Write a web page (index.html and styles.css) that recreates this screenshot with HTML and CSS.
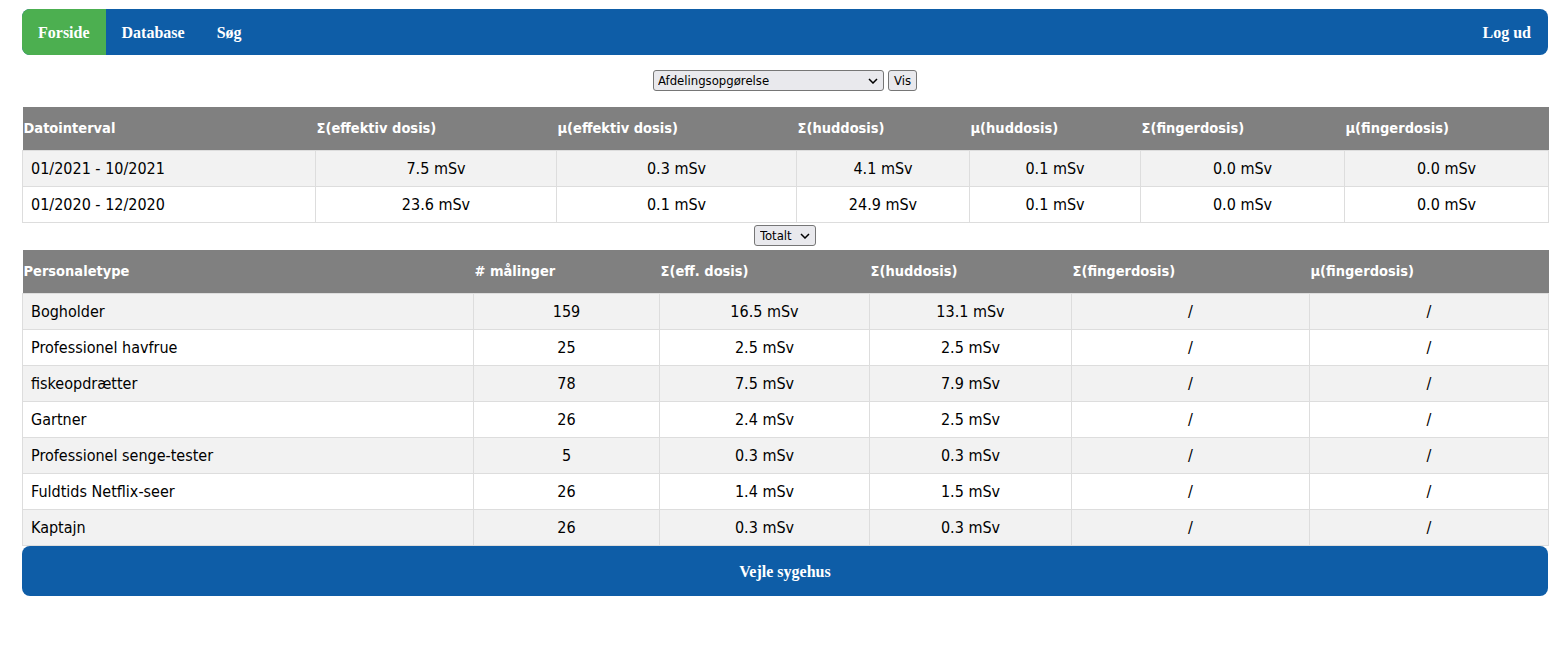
FILE: index.html
```html
<!DOCTYPE html>
<html lang="da">
<head>
<meta charset="utf-8">
<title>Forside</title>
<link rel="stylesheet" href="styles.css">
</head>
<body>
<div class="page">
  <nav class="topnav">
    <a class="nav-link active" href="#">Forside</a>
    <a class="nav-link" href="#">Database</a>
    <a class="nav-link" href="#">Søg</a>
    <a class="nav-link right" href="#">Log ud</a>
  </nav>

  <form class="report-form">
    <span class="select-wrap">
      <select class="report-select">
        <option>Afdelingsopgørelse</option>
      </select>
      <svg class="chev" width="10" height="6" viewBox="0 0 10 6"><path d="M1 1 L5 5 L9 1" fill="none" stroke="#000" stroke-width="1.5"/></svg>
    </span>
    <button type="button" class="vis-btn">Vis</button>
  </form>

  <table class="data-table summary">
    <colgroup>
      <col class="c1-1"><col class="c1-2"><col class="c1-3"><col class="c1-4"><col class="c1-5"><col class="c1-6"><col class="c1-7">
    </colgroup>
    <thead>
      <tr>
        <th>Datointerval</th>
        <th>Σ(effektiv dosis)</th>
        <th>μ(effektiv dosis)</th>
        <th>Σ(huddosis)</th>
        <th>μ(huddosis)</th>
        <th>Σ(fingerdosis)</th>
        <th>μ(fingerdosis)</th>
      </tr>
    </thead>
    <tbody>
      <tr>
        <td class="label">01/2021 - 10/2021</td>
        <td>7.5 mSv</td><td>0.3 mSv</td><td>4.1 mSv</td><td>0.1 mSv</td><td>0.0 mSv</td><td>0.0 mSv</td>
      </tr>
      <tr>
        <td class="label">01/2020 - 12/2020</td>
        <td>23.6 mSv</td><td>0.1 mSv</td><td>24.9 mSv</td><td>0.1 mSv</td><td>0.0 mSv</td><td>0.0 mSv</td>
      </tr>
    </tbody>
  </table>

  <div class="total-row">
    <span class="select-wrap">
      <select class="total-select">
        <option>Totalt</option>
      </select>
      <svg class="chev" width="10" height="6" viewBox="0 0 10 6"><path d="M1 1 L5 5 L9 1" fill="none" stroke="#000" stroke-width="1.5"/></svg>
    </span>
  </div>

  <table class="data-table staff">
    <colgroup>
      <col class="c2-1"><col class="c2-2"><col class="c2-3"><col class="c2-4"><col class="c2-5"><col class="c2-6">
    </colgroup>
    <thead>
      <tr>
        <th>Personaletype</th>
        <th># målinger</th>
        <th>Σ(eff. dosis)</th>
        <th>Σ(huddosis)</th>
        <th>Σ(fingerdosis)</th>
        <th>μ(fingerdosis)</th>
      </tr>
    </thead>
    <tbody>
      <tr><td class="label">Bogholder</td><td>159</td><td>16.5 mSv</td><td>13.1 mSv</td><td>/</td><td>/</td></tr>
      <tr><td class="label">Professionel havfrue</td><td>25</td><td>2.5 mSv</td><td>2.5 mSv</td><td>/</td><td>/</td></tr>
      <tr><td class="label">fiskeopdrætter</td><td>78</td><td>7.5 mSv</td><td>7.9 mSv</td><td>/</td><td>/</td></tr>
      <tr><td class="label">Gartner</td><td>26</td><td>2.4 mSv</td><td>2.5 mSv</td><td>/</td><td>/</td></tr>
      <tr><td class="label">Professionel senge-tester</td><td>5</td><td>0.3 mSv</td><td>0.3 mSv</td><td>/</td><td>/</td></tr>
      <tr><td class="label">Fuldtids Netflix-seer</td><td>26</td><td>1.4 mSv</td><td>1.5 mSv</td><td>/</td><td>/</td></tr>
      <tr><td class="label">Kaptajn</td><td>26</td><td>0.3 mSv</td><td>0.3 mSv</td><td>/</td><td>/</td></tr>
    </tbody>
  </table>

  <footer class="footer">Vejle sygehus</footer>
</div>
</body>
</html>
```

FILE: styles.css
```css
html, body {
  margin: 0;
  padding: 0;
  background: #ffffff;
}

.page {
  padding: 9px 20px 0 22px;
  font-family: "Liberation Serif", "Times New Roman", serif;
}

.topnav {
  display: flex;
  background: #0e5da7;
  border-radius: 8px;
  overflow: hidden;
}

.nav-link {
  display: block;
  padding: 15px 16px 13px;
  color: #ffffff;
  font-weight: bold;
  font-size: 16px;
  line-height: 18px;
  text-decoration: none;
}

.nav-link.active {
  background: #4caf50;
}

.nav-link.right {
  margin-left: auto;
  padding-right: 17px;
}

.report-form {
  display: flex;
  justify-content: center;
  align-items: center;
  gap: 4px;
  margin: 0;
  padding: 15px 0 16px;
}

.select-wrap {
  position: relative;
  display: block;
  height: 21px;
}

.chev {
  position: absolute;
  right: 6px;
  top: 8px;
  pointer-events: none;
}

.report-select,
.total-select,
.vis-btn {
  font-family: "DejaVu Sans Condensed", "DejaVu Sans", sans-serif;
  font-size: 13px;
  height: 21px;
  border: 1px solid #767676;
  border-radius: 3px;
  background: #e9e9ed;
  color: #000000;
  margin: 0;
  display: block;
}

.report-select,
.total-select {
  appearance: none;
  -webkit-appearance: none;
  padding: 0 0 0 4px;
  line-height: 19px;
}

.report-select {
  width: 231px;
}

.vis-btn {
  width: 29px;
  padding: 0;
}

.total-select {
  width: 62px;
  padding-left: 5px;
}

.total-row {
  display: flex;
  justify-content: center;
  padding: 2px 0 4px;
}

.data-table {
  width: 100%;
  border-collapse: collapse;
  table-layout: fixed;
  font-family: "DejaVu Sans Condensed", "DejaVu Sans", sans-serif;
  color: #000000;
}

.data-table th {
  background: #808080;
  color: #ffffff;
  font-weight: bold;
  font-size: 14.5px;
  text-align: left;
  padding: 12px 1px;
  line-height: 19px;
  border: none;
}

.data-table td {
  border: 1px solid #dddddd;
  font-size: 16px;
  padding: 8px;
  line-height: 19px;
  text-align: center;
}

.data-table td.label {
  text-align: left;
}

.data-table tbody tr:nth-child(odd) {
  background: #f2f2f2;
}

.c1-1 { width: 293px; }
.c1-2 { width: 241px; }
.c1-3 { width: 240px; }
.c1-4 { width: 173px; }
.c1-5 { width: 171px; }
.c1-6 { width: 204px; }
.c1-7 { width: 204px; }

.c2-1 { width: 451px; }
.c2-2 { width: 186px; }
.c2-3 { width: 210px; }
.c2-4 { width: 202px; }
.c2-5 { width: 238px; }
.c2-6 { width: 239px; }

.footer {
  background: #0e5da7;
  color: #ffffff;
  font-weight: bold;
  font-size: 16px;
  line-height: 18px;
  text-align: center;
  padding: 17px 0 15px;
  border-radius: 8px;
}
```
